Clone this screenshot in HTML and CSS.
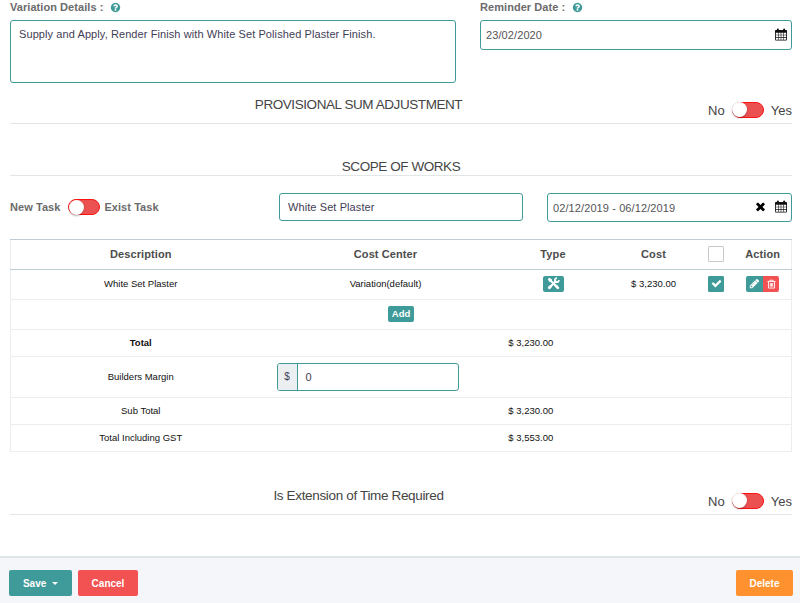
FILE: index.html
```html
<!DOCTYPE html>
<html lang="en">
<head>
    <meta charset="UTF-8">
    <meta name="viewport" content="width=device-width, initial-scale=1.0">
    <title>Variation</title>
    <link rel="stylesheet" href="styles.css">
</head>
<body>

    <svg class="sprite">
        <symbol id="help" viewBox="0 0 1792 1792">
            <path d="M1024 1376v-192q0-14-9-23t-23-9h-192q-14 0-23 9t-9 23v192q0 14 9 23t23 9h192q14 0 23-9t9-23zm256-672q0-88-55.500-163t-138.500-116-170-41q-243 0-371 213-15 24 8 42l132 100q7 6 19 6 16 0 25-12 53-68 86-92 34-24 86-24 48 0 85.500 26t37.500 59q0 38-20 61t-68 45q-63 28-115.500 86.500t-52.500 125.500v36q0 14 9 23t23 9h192q14 0 23-9t9-23q0-19 21.500-49.500t54.500-49.500q32-18 49-28.500t46-35 44.500-48 28-60.500 12.500-81zm384 192q0 209-103 385.500t-279.500 279.500-385.500 103-385.500-103-279.500-279.500-103-385.500 103-385.500 279.500-279.500 385.500-103 385.500 103 279.500 279.500 103 385.500z"/>
        </symbol>
        <symbol id="calendar" viewBox="0 0 13 13">
            <path fill-rule="evenodd" d="M2 1.500V1a1 1 0 0 1 2.200 0v.5h4.600V1A1 1 0 0 1 11 1v.5h1a1 1 0 0 1 1 1V12a1 1 0 0 1-1 1H1a1 1 0 0 1-1-1V2.500a1 1 0 0 1 1-1zM.9 4.500v2.200h2.400V4.500zm3 0v2.200h2.300V4.500zm2.900 0v2.200h2.300V4.500zm2.900 0v2.200h2.400V4.500zM.9 7.300v2h2.400v-2zm3 0v2h2.300v-2zm2.900 0v2h2.300v-2zm2.900 0v2h2.400v-2zM.9 9.900v2.200h2.400V9.900zm3 0v2.200h2.300V9.900zm2.900 0v2.200h2.300V9.900zm2.900 0v2.200h2.400V9.900z"/>
        </symbol>
        <symbol id="times" viewBox="0 0 1792 1792">
            <path d="M1490 1322q0 40-28 68l-136 136q-28 28-68 28t-68-28l-294-294-294 294q-28 28-68 28t-68-28l-136-136q-28-28-28-68t28-68l294-294-294-294q-28-28-28-68t28-68l136-136q28-28 68-28t68 28l294 294 294-294q28-28 68-28t68 28l136 136q28 28 28 68t-28 68l-294 294 294 294q28 28 28 68z"/>
        </symbol>
        <symbol id="check" viewBox="0 0 1792 1792">
            <path d="M1671 566q0 40-28 68l-724 724-136 136q-28 28-68 28t-68-28l-136-136-362-362q-28-28-28-68t28-68l136-136q28-28 68-28t68 28l294 295 656-657q28-28 68-28t68 28l136 136q28 28 28 68z"/>
        </symbol>
        <symbol id="pencil" viewBox="0 0 1792 1792">
            <path d="M491 1536l91-91-235-235-91 91v107h128v128h107zm523-928q0-22-22-22-10 0-17 7l-542 542q-7 7-7 17 0 22 22 22 10 0 17-7l542-542q7-7 7-17zm-54-192l416 416-832 832h-416v-416zm683 96q0 53-37 90l-166 166-416-416 166-165q36-38 90-38 53 0 91 38l235 234q37 39 37 91z"/>
        </symbol>
        <symbol id="trash" viewBox="0 0 10 10">
            <path fill="none" stroke="currentColor" d="M.5 2.200h9M3.200 2V.8h3.600V2M1.600 2.500v7h6.800v-7M3.700 4v4M5 4v4M6.300 4v4"/>
        </symbol>
        <symbol id="tools" viewBox="0 0 14 14">
            <path fill="none" stroke="currentColor" stroke-width="2.200" d="M3.500 3.500l7.500 7.500M10 4l-7.500 7.500"/>
            <path d="M.8 2.500L2.500.8l2.700 1.700.3 1.900-1.100 1.100-1.900-.3z"/>
            <path fill="none" stroke="currentColor" stroke-width="1.800" d="M10.800 1.200a2.200 2.200 0 1 0 2 2.100"/>
            <path fill="none" stroke="currentColor" stroke-width="3" stroke-linecap="round" d="M9.800 9.800l1.900 1.900M3.800 10.200l-1.300 1.300"/>
        </symbol>
    </svg>

    <div class="content">
        <div class="details">
            <div class="field">
                <label class="label">Variation Details : <svg class="help"><use href="#help"/></svg></label>
                <div class="control textarea">Supply and Apply, Render Finish with White Set Polished Plaster Finish.</div>
            </div>
            <div class="field">
                <label class="label">Reminder Date : <svg class="help"><use href="#help"/></svg></label>
                <div class="control date reminder"><span>23/02/2020</span><svg class="calendar"><use href="#calendar"/></svg></div>
            </div>
        </div>

        <div class="section provisional">
            <h4 class="title">PROVISIONAL SUM ADJUSTMENT</h4>
            <div class="choice"><span>No</span><span class="switch"></span><span>Yes</span></div>
        </div>

        <div class="section scope">
            <h4 class="title">SCOPE OF WORKS</h4>
        </div>

        <div class="task-row">
            <div class="task-type"><span>New Task</span><span class="switch"></span><span>Exist Task</span></div>
            <div class="control task-name">White Set Plaster</div>
            <div class="control date range"><span>02/12/2019 - 06/12/2019</span><svg class="times"><use href="#times"/></svg><svg class="calendar"><use href="#calendar"/></svg></div>
        </div>

        <table class="table">
            <colgroup>
                <col class="col-desc"><col class="col-center"><col class="col-type"><col class="col-cost"><col class="col-check"><col class="col-action">
            </colgroup>
            <thead>
                <tr><th>Description</th><th class="center-cell">Cost Center</th><th>Type</th><th>Cost</th><th><span class="checkbox"></span></th><th class="action-cell">Action</th></tr>
            </thead>
            <tbody>
                <tr class="item">
                    <td>White Set Plaster</td>
                    <td class="center-cell">Variation(default)</td>
                    <td><span class="badge"><svg class="tools"><use href="#tools"/></svg></span></td>
                    <td>$ 3,230.00</td>
                    <td><span class="checkbox checked"><svg><use href="#check"/></svg></span></td>
                    <td class="action-cell"><div class="actions"><button class="edit"><svg><use href="#pencil"/></svg></button><button class="remove"><svg><use href="#trash"/></svg></button></div></td>
                </tr>
                <tr class="item"><td colspan="6"><button class="add">Add</button></td></tr>
                <tr><td><b>Total</b></td><td colspan="5">$ 3,230.00</td></tr>
                <tr class="margin">
                    <td>Builders Margin</td>
                    <td class="money-cell" colspan="5"><div class="control money"><span class="addon">$</span><span class="amount">0</span></div></td>
                </tr>
                <tr><td>Sub Total</td><td colspan="5">$ 3,230.00</td></tr>
                <tr><td>Total Including GST</td><td colspan="5">$ 3,553.00</td></tr>
            </tbody>
        </table>

        <div class="section extension">
            <h4 class="title">Is Extension of Time Required</h4>
            <div class="choice"><span>No</span><span class="switch"></span><span>Yes</span></div>
        </div>
    </div>

    <div class="footer">
        <button class="btn save">Save <span class="caret"></span></button>
        <button class="btn cancel">Cancel</button>
        <button class="btn delete">Delete</button>
    </div>

</body>
</html>
```
FILE: styles.css
```css
* {
    box-sizing: border-box;
}
body {
    margin: 0;
    height: 603px;
    overflow: hidden;
    display: flex;
    flex-direction: column;
    background-color: #fff;
    font-family: "Liberation Sans", Arial, sans-serif;
    font-size: 11px;
    color: #575962;
}
svg {
    display: block;
    fill: currentColor;
}
button {
    border: none;
    padding: 0;
    font-family: inherit;
    color: white;
    cursor: pointer;
}
.sprite {
    display: none;
}
.content {
    flex: 1;
    padding: 0 8px 0 10px;
}
.details {
    display: grid;
    grid-template-columns: 446px 312px;
    justify-content: space-between;
    align-items: start;
}
.label {
    display: flex;
    align-items: center;
    gap: 7px;
    height: 20px;
    padding-bottom: 6px;
    font-weight: bold;
    letter-spacing: 0.06px;
    color: #6b6b6b;
}
.help {
    width: 11px;
    height: 11px;
    color: #3f9b99;
}
.control {
    border: 1px solid #3f9b99;
    border-radius: 3px;
    background-color: #fff;
    letter-spacing: 0.09px;
    color: #3f4056;
}
.textarea {
    height: 63px;
    padding: 7px 8px;
}
.date {
    display: flex;
    align-items: center;
    padding: 0 4px 0 5px;
    color: #555;
    letter-spacing: 0.1px;
}
.date span {
    flex: 1;
}
.reminder {
    height: 30px;
}
.calendar {
    width: 12px;
    height: 13px;
    margin-bottom: 2px;
    color: #111;
}
.times {
    width: 13px;
    height: 13px;
    margin: 0 8px 3px 0;
    color: #000;
}
.section {
    display: grid;
    grid-template-columns: 697px 85px;
    border-bottom: 1px solid #e3e6e6;
}
.title {
    margin: 0;
    text-align: center;
    font-size: 13.500px;
    line-height: 20px;
    font-weight: normal;
    letter-spacing: -0.43px;
    color: #444;
}
.provisional {
    height: 41px;
    padding-top: 12px;
}
.scope {
    height: 52px;
    padding-top: 32px;
    grid-template-columns: 1fr;
}
.scope .title {
    line-height: 22px;
    height: 19px;
}
.extension {
    height: 63px;
    padding-top: 34px;
}
.extension .title {
    letter-spacing: -0.34px;
}
.choice {
    display: flex;
    align-items: center;
    justify-content: space-between;
    padding: 5px 0 0 1px;
    height: 24px;
    font-size: 13px;
    color: #444;
}
.choice span:not(.switch) {
    padding-top: 1px;
}
.switch {
    width: 32px;
    height: 16px;
    border: 1px solid #fa1414;
    border-radius: 8px;
    background-color: #ec5151;
}
.switch::before {
    content: "";
    display: block;
    width: 15px;
    height: 15px;
    margin: -0.5px 0 0 -0.5px;
    border-radius: 8px;
    background-color: white;
    box-shadow: 0 1px 2px rgba(0, 0, 0, 0.3);
}
.task-row {
    display: grid;
    grid-template-columns: 269px 244px 245px;
    padding-top: 17px;
    height: 63px;
    align-items: start;
}
.task-type {
    display: flex;
    align-items: center;
    height: 28px;
    font-weight: bold;
    letter-spacing: 0.06px;
    color: #6b6b6b;
}
.task-type .switch {
    margin: 0 4px 0 8px;
}
.task-name {
    height: 28px;
    padding: 0 8px;
    line-height: 26px;
}
.range {
    height: 29px;
    margin: 0 -24px 0 24px;
}
.table {
    width: 781px;
    table-layout: fixed;
    border-collapse: collapse;
    border: 1px solid #ebedee;
    text-align: center;
    font-size: 9.500px;
    color: #111;
}
.col-desc { width: 260px; }
.col-center { width: 229px; }
.col-type { width: 107px; }
.col-cost { width: 94px; }
.col-check { width: 31px; }
.col-action { width: 60px; }
.table th {
    height: 30px;
    padding: 0 0 2px;
    border-top: 1px solid #bfcdd6;
    border-bottom: 1px solid #bfcdd6;
    font-size: 11px;
    letter-spacing: 0.1px;
    color: #4c4c4c;
}
.table td {
    height: 27px;
    padding: 0 0 2px;
    border-bottom: 1px solid #ebedee;
}
.table .center-cell {
    padding-left: 1px;
}
.table .action-cell {
    padding-left: 3px;
}
.table .item td {
    height: 30px;
}
.table .margin td {
    height: 41px;
}
.table .money-cell {
    padding: 0;
}
.checkbox {
    display: flex;
    align-items: center;
    justify-content: center;
    width: 16px;
    height: 16px;
    margin: 0 auto;
    border: 1px solid #c9c9c9;
    border-radius: 1px;
}
.checkbox.checked {
    border-color: #3f9b99;
    background-color: #3f9b99;
    color: white;
}
.checkbox svg {
    flex: none;
    width: 11px;
    height: 11px;
}
.badge {
    display: flex;
    align-items: center;
    justify-content: center;
    width: 21px;
    height: 16px;
    margin: 0 auto;
    border-radius: 2px;
    background-color: #3f9b99;
    color: white;
}
.tools {
    width: 13px;
    height: 13px;
}
.actions {
    display: flex;
    justify-content: center;
}
.actions button {
    display: flex;
    align-items: center;
    justify-content: center;
    width: 17px;
    height: 16px;
    border-radius: 2px 0 0 2px;
    background-color: #3f9b99;
}
.actions .remove {
    width: 16px;
    border-radius: 0 2px 2px 0;
    background-color: #f25252;
}
.actions svg {
    width: 11px;
    height: 11px;
}
.actions .remove svg {
    width: 9px;
    height: 10px;
}
.add {
    display: block;
    width: 26px;
    height: 16px;
    margin: 0 auto;
    border-radius: 2px;
    background-color: #3f9b99;
    font-size: 9.500px;
    font-weight: bold;
}
.money {
    display: flex;
    width: 182px;
    height: 28px;
    margin-left: 6px;
    line-height: 26px;
    overflow: hidden;
    font-size: 11px;
}
.addon {
    width: 20px;
    border-right: 1px solid #3f9b99;
    background-color: #eceff1;
    font-size: 10px;
}
.amount {
    padding-left: 8px;
}
.footer {
    display: flex;
    align-items: flex-start;
    gap: 6px;
    height: 47px;
    padding: 12px 7px 0 9px;
    border-top: 2px solid #dfe6e6;
    background-color: #f5f6fa;
}
.btn {
    height: 26px;
    border-radius: 2px;
    font-size: 10px;
    font-weight: bold;
}
.save {
    width: 63px;
    background-color: #3f9b99;
}
.caret {
    display: inline-block;
    margin-left: 3px;
    border: 3px solid transparent;
    border-top-color: white;
    border-bottom: none;
    vertical-align: 2px;
}
.cancel {
    width: 60px;
    background-color: #f25252;
}
.delete {
    width: 57px;
    margin-left: auto;
    background-color: #ff922e;
}
```
